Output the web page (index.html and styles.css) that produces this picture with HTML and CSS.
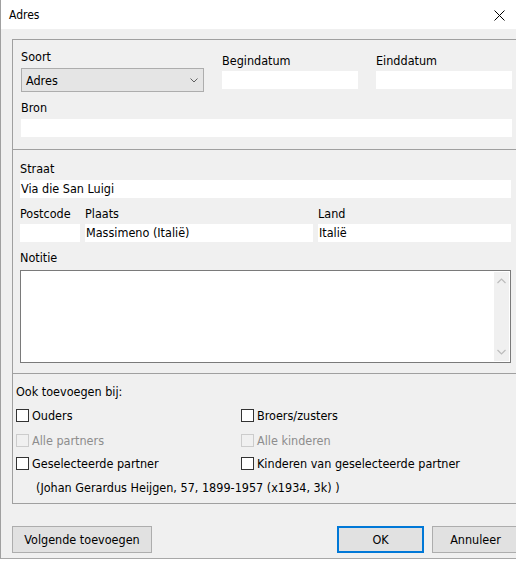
FILE: index.html
```html
<!DOCTYPE html>
<html lang="nl">
	<head>
		<meta charset="UTF-8" />
		<meta name="viewport" content="width=device-width, initial-scale=1.0" />
		<title>Adres</title>
		<link rel="stylesheet" href="styles.css">
	</head>
	<body>
		<div class="dialog">
			<div class="titlebar">
				<span class="title">Adres</span>
				<svg class="close" width="11" height="11" viewBox="0 0 11 11">
					<path d="M0.5 0.5L10.5 10.5M10.5 0.5L0.5 10.5" stroke="#000" stroke-width="1" fill="none" />
				</svg>
			</div>

			<div class="groups">
				<div class="group group-main">
					<div class="row-top">
						<div class="field soort">
							<div class="label">Soort</div>
							<div class="combo">
								<span>Adres</span>
								<svg width="8" height="5" viewBox="0 0 8 5">
									<path d="M0.5 0.5L4 4L7.5 0.5" stroke="#606060" stroke-width="1" fill="none" />
								</svg>
							</div>
						</div>
						<div class="field date">
							<div class="label">Begindatum</div>
							<div class="input"></div>
						</div>
						<div class="field date">
							<div class="label">Einddatum</div>
							<div class="input"></div>
						</div>
					</div>
					<div class="field bron">
						<div class="label">Bron</div>
						<div class="input"></div>
					</div>
				</div>

				<div class="group group-address">
					<div class="field">
						<div class="label">Straat</div>
						<div class="input">Via die San Luigi</div>
					</div>
					<div class="row-place">
						<div class="field postcode">
							<div class="label">Postcode</div>
							<div class="input"></div>
						</div>
						<div class="field plaats">
							<div class="label">Plaats</div>
							<div class="input">Massimeno (Italië)</div>
						</div>
						<div class="field land">
							<div class="label">Land</div>
							<div class="input">Italië</div>
						</div>
					</div>
					<div class="field notitie">
						<div class="label">Notitie</div>
						<div class="memo">
							<div class="scrollbar">
								<svg width="9" height="6" viewBox="0 0 9 6">
									<path d="M0.5 5L4.5 1L8.5 5" stroke="#bcbcbc" stroke-width="1.2" fill="none" />
								</svg>
								<svg width="9" height="6" viewBox="0 0 9 6">
									<path d="M0.5 1L4.5 5L8.5 1" stroke="#bcbcbc" stroke-width="1.2" fill="none" />
								</svg>
							</div>
						</div>
					</div>
				</div>

				<div class="group group-extra">
					<div class="label">Ook toevoegen bij:</div>
					<div class="checks">
						<div class="check row1"><span class="box"></span>Ouders</div>
						<div class="check row1"><span class="box"></span>Broers/zusters</div>
						<div class="check row2 disabled"><span class="box"></span>Alle partners</div>
						<div class="check row2 disabled"><span class="box"></span>Alle kinderen</div>
						<div class="check row3"><span class="box"></span>Geselecteerde partner</div>
						<div class="check row3"><span class="box"></span>Kinderen van geselecteerde partner</div>
					</div>
					<div class="partner">(Johan Gerardus Heijgen, 57, 1899-1957 (x1934, 3k) )</div>
				</div>
			</div>

			<div class="buttons">
				<button class="btn btn-next">Volgende toevoegen</button>
				<button class="btn btn-ok">OK</button>
				<button class="btn btn-cancel">Annuleer</button>
			</div>
		</div>
	</body>
</html>
```

FILE: styles.css
```css
body {
	margin: 0;
	width: 516px;
	height: 562px;
	overflow: hidden;
	background-color: #fff;
	font-family: "DejaVu Sans Condensed", "DejaVu Sans", sans-serif;
	font-stretch: condensed;
	font-size: 12.5px;
	color: #000;
}
.dialog {
	height: 559px;
	box-sizing: border-box;
	background-color: #f0f0f0;
	border-left: 1px solid #a0a0a0;
	border-bottom: 1px solid #a8a8a8;
	overflow: hidden;
}
.titlebar {
	height: 29px;
	background-color: #fff;
	display: flex;
	align-items: center;
	justify-content: space-between;
	padding: 0 11px 0 8px;
}
.title {
	font-size: 12px;
}
.close {
	margin-top: 1px;
}
.groups {
	margin: 10px 0 0 11px;
	border-left: 1px solid #a0a0a0;
	border-bottom: 1px solid #a0a0a0;
}
.group {
	border-top: 1px solid #a0a0a0;
}
.label {
	height: 16px;
	line-height: 16px;
	white-space: nowrap;
}
.input {
	height: 18px;
	line-height: 18px;
	background-color: #fff;
	padding-left: 1px;
	white-space: nowrap;
	overflow: hidden;
}

/* bovenste groep */
.group-main {
	padding: 9px 4px 12px 8px;
}
.row-top {
	display: flex;
	gap: 18px;
}
.soort {
	width: 183px;
}
.soort .label {
	margin-bottom: 3px;
}
.combo {
	height: 24px;
	box-sizing: border-box;
	background-color: #e5e5e5;
	border: 1px solid #adadad;
	display: flex;
	align-items: center;
	justify-content: space-between;
	padding: 0 5px 0 4px;
}
.date {
	width: 136px;
	padding-top: 4px;
}
.date .label {
	margin-bottom: 2px;
}
.bron {
	margin-top: 8px;
}
.bron .label {
	margin-bottom: 3px;
}

/* adres */
.group-address {
	padding: 11px 5px 10px 7px;
}
.group-address .label {
	margin-bottom: 3px;
}
.row-place {
	display: flex;
	gap: 5px;
	margin-top: 8px;
}
.row-place .label {
	margin-bottom: 2px;
}
.postcode {
	width: 60px;
}
.plaats {
	width: 228px;
}
.land {
	flex: 1;
}
.notitie {
	margin-top: 8px;
}
.notitie .label {
	margin-bottom: 4px;
}
.memo {
	height: 93px;
	box-sizing: border-box;
	border: 1px solid #7a7a7a;
	background-color: #fff;
	display: flex;
	justify-content: flex-end;
	padding: 1px;
}
.scrollbar {
	width: 15px;
	background-color: #f0f0f0;
	display: flex;
	flex-direction: column;
	align-items: center;
	justify-content: space-between;
	padding: 6px 0;
}

/* ook toevoegen */
.group-extra {
	padding: 10px 0 7px 3px;
}
.checks {
	display: grid;
	grid-template-columns: 225px 1fr;
	margin-top: 9px;
}
.check {
	height: 13px;
	display: flex;
	align-items: center;
	white-space: nowrap;
}
.check.row2 {
	margin-top: 12px;
}
.check.row3 {
	margin-top: 10px;
}
.box {
	width: 13px;
	height: 13px;
	box-sizing: border-box;
	border: 1px solid #333;
	background-color: #fff;
	margin-right: 3px;
	flex: none;
}
.disabled {
	color: #8d8d8d;
}
.disabled .box {
	border-color: #cccccc;
	background-color: #f0f0f0;
}
.partner {
	height: 16px;
	line-height: 16px;
	margin: 10px 0 0 20px;
	white-space: nowrap;
}

/* knoppen */
.buttons {
	display: flex;
	margin: 22px -3px 0 11px;
}
.btn {
	height: 27px;
	box-sizing: border-box;
	background-color: #e1e1e1;
	border: 1px solid #adadad;
	font-family: inherit;
	font-stretch: inherit;
	font-size: 12.5px;
	color: #000;
	padding: 0;
}
.btn-next {
	width: 140px;
}
.btn-ok {
	width: 87px;
	margin-left: auto;
	border: 2px solid #0078d7;
}
.btn-cancel {
	width: 87px;
	margin-left: 8px;
}
```
